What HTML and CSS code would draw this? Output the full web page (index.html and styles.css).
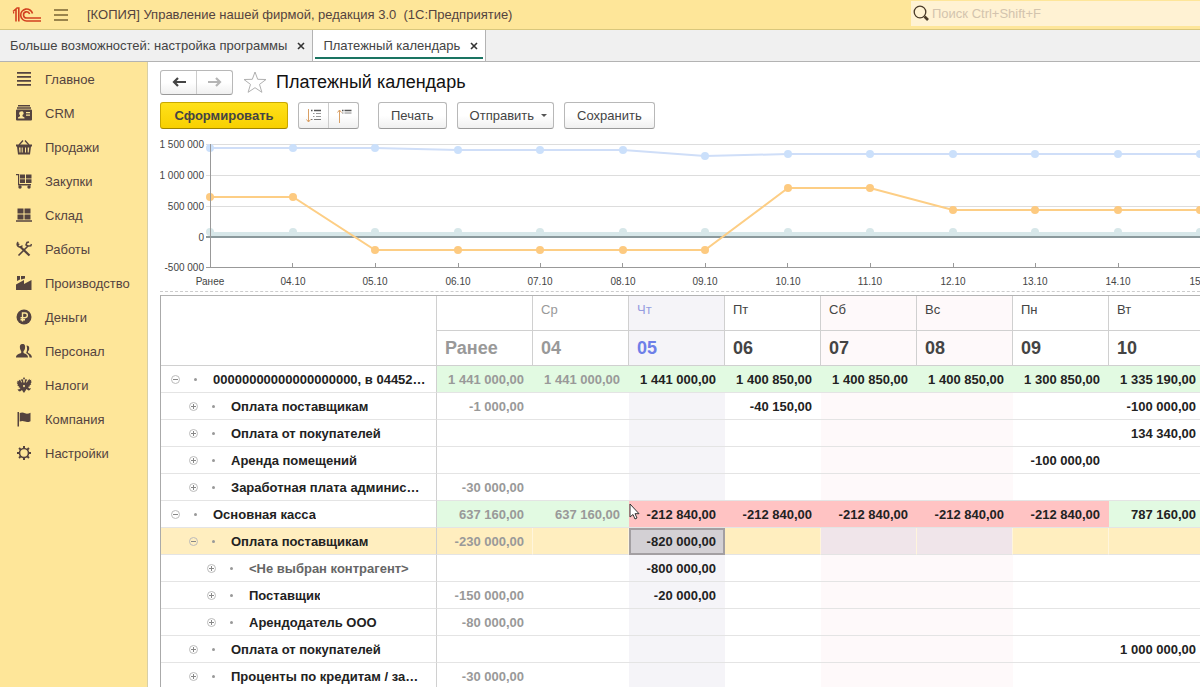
FILE: index.html
```html
<!DOCTYPE html>
<html lang="ru">
<head>
    <meta charset="UTF-8">
    <meta name="viewport" content="width=device-width, initial-scale=1.0">
    <title>Платежный календарь</title>
    <link rel="stylesheet" href="styles.css">
</head>
<body>
    <!-- toggle icons used in the tree -->
    <svg class="defs" aria-hidden="true">
        <symbol id="plus" viewBox="0 0 9 9"><circle cx="4.5" cy="4.5" r="4" fill="none" stroke="#bbb"/><path d="M2 4.5h5M4.500 2v5" stroke="#888"/></symbol>
        <symbol id="minus" viewBox="0 0 9 9"><circle cx="4.5" cy="4.5" r="4" fill="none" stroke="#bbb"/><path d="M2 4.5h5" stroke="#888"/></symbol>
    </svg>

    <header class="topbar">
        <svg class="logo" width="30" height="16" viewBox="0 0 30 16" fill="none" stroke="#d2401f" stroke-width="1.600">
            <path d="M1 4.500L4 2V14.500M1 5.800h1.200M6.800 14.500V1H4.500"/>
            <path d="M20.500 6.500A6 6 0 1 0 14.800 14H29M17.600 7A3.100 3.100 0 1 0 14.800 11H29"/>
        </svg>
        <button class="menu" aria-label="Меню">
            <svg width="14" height="12" viewBox="0 0 14 12" stroke="#7a6433" stroke-width="1.300"><path d="M0 1h14M0 6h14M0 11h14"/></svg>
        </button>
        <div class="app-title">[КОПИЯ] Управление нашей фирмой, редакция 3.0 &nbsp;(1С:Предприятие)</div>
        <div class="search">
            <svg width="17" height="17" viewBox="0 0 17 17" fill="none" stroke="#4a3a28"><circle cx="7" cy="7" r="5.800" stroke-width="1.300"/><path d="M11.500 11.500l3.500 3.500" stroke-width="2.600"/></svg>
            <input type="text" aria-label="Поиск" placeholder="Поиск Ctrl+Shift+F">
        </div>
    </header>

    <nav class="tabs">
        <div class="tab"><a href="#">Больше возможностей: настройка программы</a><button aria-label="Закрыть"><svg width="8" height="8" viewBox="0 0 8 8"><path d="M1 1l6 6M7 1L1 7" stroke="#333" stroke-width="1.600"/></svg></button></div>
        <div class="tab active"><a href="#">Платежный календарь</a><button aria-label="Закрыть"><svg width="8" height="8" viewBox="0 0 8 8"><path d="M1 1l6 6M7 1L1 7" stroke="#333" stroke-width="1.600"/></svg></button></div>
    </nav>

    <div class="layout">
        <nav class="sidebar">
            <a href="#"><svg viewBox="0 0 16 16"><path d="M1 1h14v1.800H1zM1 5h14v1.800H1zM1 9h14v1.800H1zM1 13h14v1.800H1z"/></svg>Главное</a>
            <a href="#"><svg viewBox="0 0 16 16"><path d="M2 0h12v1.500H2zM1 2.200h14v1.500H1z"/><path fill-rule="evenodd" d="M1 4.500h14q1 0 1 1V14.500q0 1-1 1H1q-1 0-1-1V5.500q0-1 1-1zM5 6.500a1.900 1.900 0 0 0-1 3.500v1.200L2 12.500V13.500h6.500v-1L6.500 11.200V10A1.900 1.900 0 0 0 5 6.500zM10 7v1.200h4V7zM10 9.500v1.200h4V9.500z"/></svg>CRM</a>
            <a href="#"><svg viewBox="0 0 16 16"><path d="M3 6l4-4.500M13 6L9 1.500" stroke="#54433f" stroke-width="1.300"/><path fill-rule="evenodd" d="M0 5.500h16v2h-1l-1 8H2L1 7.500H0zM3 8.500l.5 5h1v-5zM5.700 8.500v5h1v-5zM9 8.500v5h1v-5zM11.700 8.500v5h1l.5-5z"/></svg>Продажи</a>
            <a href="#"><svg viewBox="0 0 16 16"><path d="M0 1h3.200v10H15v1.400H2V2.200H0zM4 1.500h5v4H4zM10 1.500h5.500v4H10zM4 6.300h5V10H4zM10 6.300h5.500V10H10z"/><circle cx="4" cy="14" r="1.700"/><circle cx="13" cy="14" r="1.700"/></svg>Закупки</a>
            <a href="#"><svg viewBox="0 0 16 16"><path d="M1.500 1.500h6v5h-6zM8.500 1.500h6v5h-6zM1.500 7.500h6v5h-6zM8.500 7.500h6v5h-6zM0 13.200h16v1.500H0z"/></svg>Склад</a>
            <a href="#"><svg viewBox="0 0 16 16" fill="none" stroke="#54433f"><path d="M4 5.500L13.500 14.500" stroke-width="2.200"/><path d="M2.200 1.200A2.700 2.700 0 1 0 6.300 4.500M1 2.500l2.300 1.300M12 5L2.500 14.500" stroke-width="1.600"/><path d="M12 5l-2-1 1-2.500 2-.500M12 5l2.800-.2.700-1.800" stroke-width="1.500"/></svg>Работы</a>
            <a href="#"><svg viewBox="0 0 16 16"><path d="M1 1h3v3.500L1 6zM5 1h4v2.500L5 4.500zM0 15V9.500L8 5v4l7.500-4V15z"/></svg>Производство</a>
            <a href="#"><svg viewBox="0 0 16 16"><circle cx="8" cy="8" r="7.500"/><path d="M6.500 12.500V4H9a2.300 2.300 0 0 1 0 4.700H4.500M4.500 10.700H9" fill="none" stroke="#fde699" stroke-width="1.400"/></svg>Деньги</a>
            <a href="#"><svg viewBox="0 0 16 16"><path d="M6.500 1C4 1 3.500 3 4 5.500c.2 1.200.7 2 1.200 2.700v1.600C4 11 0 11 0 14.500h12c0-3.500-3.500-3.500-4.500-4.700V8.200C8.200 7.500 8.800 6.700 9 5.500 9.400 3 9 1 6.500 1zM10.500 2.500c2 0 3 1.200 2.700 3.400-.2 1.300-.7 1.800-1.200 2.400v1.500c1.500 1 3.500 1.300 4 4.700h-2.500c0-2.200-1.500-3.400-3.300-4.500.9-2 1.300-5 .3-7.500z"/></svg>Персонал</a>
            <a href="#"><svg viewBox="0 0 16 16"><path d="M8 0l1 1.500L8 3 7 1.500zM6.300 2l1 1.500v2h1.400v-2l1-1.500 1.800 1-1.300 1 .3 2L12 3.500l1.500-1.800.3 1.500 1.500-.4-.4 1.700 1 .3-1.300 1.700.7.700-1.800 1.300.5.800-2 .8 1.500 1.500 1.500-.5-1 2-1.500.3-2-1.400-.7 1.200L8 16l-1.300-1.800-.7-1.200-2 1.400-1.500-.3-1-2 1.500.5L4.500 11l-2-.8.5-.8L1.200 8.200l.7-.7L.6 5.800l1-.3-.4-1.700 1.500.4.300-1.500L4.500 3.500 5.500 6l.3-2-1.300-1z"/><path d="M7.200 8h1.600v1.500L8 10.500l-.8-1z" fill="#fde699"/></svg>Налоги</a>
            <a href="#"><svg viewBox="0 0 16 16"><path d="M1.500 1h1.500v14.500H1.500zM3.700 2C6 1 7.500 1.500 9 2.300c1.600.7 3.500.4 5.500-.6v8.500c-2 1-4 1.200-5.500.4-1.700-.8-3.300-1-5.300 0z"/></svg>Компания</a>
            <a href="#"><svg viewBox="0 0 16 16" fill="none" stroke="#54433f"><circle cx="8" cy="8" r="4.500" stroke-width="1.600"/><path d="M8 1v2.500M8 12.500V15M1 8h2.500M12.500 8H15M3.050 3.050l1.800 1.800M11.150 11.150l1.800 1.800M3.050 12.950l1.800-1.800M11.150 4.850l1.800-1.800" stroke-width="2"/></svg>Настройки</a>
        </nav>

        <main class="content">
            <div class="heading">
                <div class="group nav-buttons">
                    <button aria-label="Назад"><svg width="14" height="10" viewBox="0 0 14 10"><path d="M6 1L2 5l4 4M2 5h12" fill="none" stroke="#444" stroke-width="2.200"/></svg></button>
                    <button aria-label="Вперед"><svg width="14" height="10" viewBox="0 0 14 10"><path d="M8 1l4 4-4 4M12 5H0" fill="none" stroke="#b5b5b5" stroke-width="2.200"/></svg></button>
                </div>
                <button class="star" aria-label="В избранное"><svg width="24" height="22" viewBox="0 0 24 22"><path d="M12 1l2.700 7.300 8.300.2-6.500 4.900 2.400 7.900L12 16.700l-6.900 4.600 2.400-7.900L1 8.500l8.300-.2z" fill="#fff" stroke="#b0b0b0"/></svg></button>
                <h1>Платежный календарь</h1>
            </div>

            <div class="toolbar">
                <button class="btn primary">Сформировать</button>
                <div class="group tree-buttons">
                    <button aria-label="Развернуть"><svg width="16" height="16" viewBox="0 0 16 16" fill="none"><path d="M2.500 1v13M.5 11.500l2 2.500 2-2.500" stroke="#d9a066"/><path d="M5 2.500h1.500M8 2.500h7" stroke="#555" stroke-width="1.500"/><path d="M7 5.500h1.500M10 5.500h5M7 8.500h1.500M10 8.500h5" stroke="#999"/><path d="M5 11.500h1.500M8 11.500h7" stroke="#777"/></svg></button>
                    <button aria-label="Свернуть"><svg width="16" height="16" viewBox="0 0 16 16" fill="none"><path d="M3.500 15V2M1.500 4.500l2-2.500 2 2.500" stroke="#d9a066"/><path d="M6 2.500h1.500M8.500 2.500h7" stroke="#555" stroke-width="1.500"/><path d="M6 5h1.500M8.500 5h7" stroke="#888"/></svg></button>
                </div>
                <button class="btn">Печать</button>
                <button class="btn send">Отправить<span class="caret"></span></button>
                <button class="btn">Сохранить</button>
            </div>

            <div class="chart">
                <svg width="1060" height="155" role="img" aria-label="Остатки по дням">
                    <path class="grid" d="M46 8.500H1060M46 39.500H1060M46 70.500H1060"/>
                    <path class="band" d="M50 99H1060"/>
                    <g class="band-dots">
                        <circle cx="50" cy="96" r="4"/><circle cx="133" cy="96" r="4"/><circle cx="215" cy="96" r="4"/><circle cx="298" cy="96" r="4"/><circle cx="380" cy="96" r="4"/><circle cx="463" cy="96" r="4"/><circle cx="545" cy="96" r="4"/><circle cx="628" cy="96" r="4"/><circle cx="710" cy="96" r="4"/><circle cx="793" cy="96" r="4"/><circle cx="875" cy="96" r="4"/><circle cx="958" cy="96" r="4"/><circle cx="1040" cy="96" r="4"/>
                    </g>
                    <path class="zero" d="M46 101H1060"/>
                    <polyline class="bank" points="50,12 133,12 215,12 298,14 380,14 463,14 545,20 628,18 710,18 793,18 875,18 958,18 1040,18"/>
                    <g class="bank-dots">
                        <circle cx="50" cy="12" r="4"/><circle cx="133" cy="12" r="4"/><circle cx="215" cy="12" r="4"/><circle cx="298" cy="14" r="4"/><circle cx="380" cy="14" r="4"/><circle cx="463" cy="14" r="4"/><circle cx="545" cy="20" r="4"/><circle cx="628" cy="18" r="4"/><circle cx="710" cy="18" r="4"/><circle cx="793" cy="18" r="4"/><circle cx="875" cy="18" r="4"/><circle cx="958" cy="18" r="4"/><circle cx="1040" cy="18" r="4"/>
                    </g>
                    <polyline class="cash" points="50,61 133,61 215,114 298,114 380,114 463,114 545,114 628,52 710,52 793,74 875,74 958,74 1040,74"/>
                    <g class="cash-dots">
                        <circle cx="50" cy="61" r="4"/><circle cx="133" cy="61" r="4"/><circle cx="215" cy="114" r="4"/><circle cx="298" cy="114" r="4"/><circle cx="380" cy="114" r="4"/><circle cx="463" cy="114" r="4"/><circle cx="545" cy="114" r="4"/><circle cx="628" cy="52" r="4"/><circle cx="710" cy="52" r="4"/><circle cx="793" cy="74" r="4"/><circle cx="875" cy="74" r="4"/><circle cx="958" cy="74" r="4"/><circle cx="1040" cy="74" r="4"/>
                    </g>
                    <path class="axis" d="M50.500 8V131.500M46 131.500H1060M132.500 127v4M215.500 127v4M298.500 127v4M380.500 127v4M462.500 127v4M545.500 127v4M627.500 127v4M710.500 127v4M793.500 127v4M875.500 127v4M958.500 127v4M1040.500 127v4"/>
                    <g class="y-labels">
                        <text x="44" y="12">1 500 000</text><text x="44" y="43">1 000 000</text><text x="44" y="74">500 000</text><text x="44" y="105">0</text><text x="44" y="135">-500 000</text>
                    </g>
                    <g class="x-labels">
                        <text x="50" y="149">Ранее</text><text x="133" y="149">04.10</text><text x="215" y="149">05.10</text><text x="298" y="149">06.10</text><text x="380" y="149">07.10</text><text x="463" y="149">08.10</text><text x="545" y="149">09.10</text><text x="628" y="149">10.10</text><text x="710" y="149">11.10</text><text x="793" y="149">12.10</text><text x="875" y="149">13.10</text><text x="958" y="149">14.10</text><text x="1042" y="149">15.10</text>
                    </g>
                </svg>
            </div>

            <table class="calendar">
                <colgroup><col class="name"><col><col><col><col><col><col><col><col></colgroup>
                <thead>
                    <tr class="weekday"><th rowspan="2"></th><th></th><th class="past">Ср</th><th class="today">Чт</th><th>Пт</th><th class="off">Сб</th><th class="off">Вс</th><th>Пн</th><th>Вт</th></tr>
                    <tr class="date"><th class="past">Ранее</th><th class="past">04</th><th class="today">05</th><th>06</th><th class="off">07</th><th class="off">08</th><th>09</th><th>10</th></tr>
                </thead>
                <tbody>
                    <tr class="total">
                        <th><div class="node"><button aria-label="Свернуть"><svg><use href="#minus"/></svg></button><i></i><span>00000000000000000000, в 04452…</span></div></th>
                        <td class="past plus">1 441 000,00</td><td class="past plus">1 441 000,00</td><td class="plus">1 441 000,00</td><td class="plus">1 400 850,00</td><td class="plus">1 400 850,00</td><td class="plus">1 400 850,00</td><td class="plus">1 300 850,00</td><td class="plus">1 335 190,00</td>
                    </tr>
                    <tr>
                        <th><div class="node level-2"><button aria-label="Развернуть"><svg><use href="#plus"/></svg></button><i></i><span>Оплата поставщикам</span></div></th>
                        <td class="past">-1 000,00</td><td></td><td class="today"></td><td>-40 150,00</td><td class="off"></td><td class="off"></td><td></td><td>-100 000,00</td>
                    </tr>
                    <tr>
                        <th><div class="node level-2"><button aria-label="Развернуть"><svg><use href="#plus"/></svg></button><i></i><span>Оплата от покупателей</span></div></th>
                        <td></td><td></td><td class="today"></td><td></td><td class="off"></td><td class="off"></td><td></td><td>134 340,00</td>
                    </tr>
                    <tr>
                        <th><div class="node level-2"><button aria-label="Развернуть"><svg><use href="#plus"/></svg></button><i></i><span>Аренда помещений</span></div></th>
                        <td></td><td></td><td class="today"></td><td></td><td class="off"></td><td class="off"></td><td>-100 000,00</td><td></td>
                    </tr>
                    <tr>
                        <th><div class="node level-2"><button aria-label="Развернуть"><svg><use href="#plus"/></svg></button><i></i><span>Заработная плата админис…</span></div></th>
                        <td class="past">-30 000,00</td><td></td><td class="today"></td><td></td><td class="off"></td><td class="off"></td><td></td><td></td>
                    </tr>
                    <tr class="total">
                        <th><div class="node"><button aria-label="Свернуть"><svg><use href="#minus"/></svg></button><i></i><span>Основная касса</span></div></th>
                        <td class="past plus">637 160,00</td><td class="past plus">637 160,00</td>
                        <td class="gap">-212 840,00<svg class="cursor" width="12" height="18" viewBox="0 0 12 18"><path d="M1 1v13l3-2.500 2 4.500 2-1-2-4.300h4z" fill="#fff" stroke="#333"/></svg></td>
                        <td class="gap">-212 840,00</td><td class="gap">-212 840,00</td><td class="gap">-212 840,00</td><td class="gap">-212 840,00</td><td class="plus">787 160,00</td>
                    </tr>
                    <tr class="current">
                        <th><div class="node level-2"><button aria-label="Свернуть"><svg><use href="#minus"/></svg></button><i></i><span>Оплата поставщикам</span></div></th>
                        <td class="past">-230 000,00</td><td></td><td class="selected">-820 000,00</td><td></td><td class="off"></td><td class="off"></td><td></td><td></td>
                    </tr>
                    <tr>
                        <th><div class="node level-3 empty"><button aria-label="Развернуть"><svg><use href="#plus"/></svg></button><i></i><span>&lt;Не выбран контрагент&gt;</span></div></th>
                        <td></td><td></td><td class="today">-800 000,00</td><td></td><td class="off"></td><td class="off"></td><td></td><td></td>
                    </tr>
                    <tr>
                        <th><div class="node level-3"><button aria-label="Развернуть"><svg><use href="#plus"/></svg></button><i></i><span>Поставщик</span></div></th>
                        <td class="past">-150 000,00</td><td></td><td class="today">-20 000,00</td><td></td><td class="off"></td><td class="off"></td><td></td><td></td>
                    </tr>
                    <tr>
                        <th><div class="node level-3"><button aria-label="Развернуть"><svg><use href="#plus"/></svg></button><i></i><span>Арендодатель ООО</span></div></th>
                        <td class="past">-80 000,00</td><td></td><td class="today"></td><td></td><td class="off"></td><td class="off"></td><td></td><td></td>
                    </tr>
                    <tr>
                        <th><div class="node level-2"><button aria-label="Развернуть"><svg><use href="#plus"/></svg></button><i></i><span>Оплата от покупателей</span></div></th>
                        <td></td><td></td><td class="today"></td><td></td><td class="off"></td><td class="off"></td><td></td><td>1 000 000,00</td>
                    </tr>
                    <tr>
                        <th><div class="node level-2"><button aria-label="Развернуть"><svg><use href="#plus"/></svg></button><i></i><span>Проценты по кредитам / за…</span></div></th>
                        <td class="past">-30 000,00</td><td></td><td class="today"></td><td></td><td class="off"></td><td class="off"></td><td></td><td></td>
                    </tr>
                </tbody>
            </table>
        </main>
    </div>
</body>
</html>
```
FILE: styles.css
```css
* { box-sizing: border-box; }
body { margin: 0; height: 100vh; display: flex; flex-direction: column; overflow: hidden; font-family: "Liberation Sans", Arial, sans-serif; font-size: 13px; color: #444; background: #fff; }
button, input { font: inherit; color: inherit; }
button { padding: 0; border: none; background: none; cursor: pointer; }
a { color: inherit; text-decoration: none; }
svg { display: block; flex: none; }
.defs { display: none; }

/* top bar */
.topbar { display: flex; align-items: center; flex: none; height: 30px; padding-left: 12px; background: #fee699; border-bottom: 1px solid #d9c77c; color: #54433f; }
.menu { margin-left: 12px; }
.app-title { flex: 1; margin-left: 19px; white-space: nowrap; }
.search { display: flex; align-items: center; gap: 2px; width: 289px; height: 25px; margin-bottom: 2px; padding-left: 2px; background: #fff2d3; }
.search input { flex: 1; min-width: 0; padding: 0; border: none; outline: none; background: none; }
.search input::placeholder { color: #d3c4ae; opacity: 1; }

/* tabs */
.tabs { display: flex; flex: none; height: 32px; background: #f0f0f0; border-bottom: 1px solid #b3b3b3; }
.tab { display: flex; align-items: center; gap: 10px; padding: 0 7px 0 10px; border-right: 1px solid #b3b3b3; white-space: nowrap; }
.tab.active { position: relative; background: #fff; }
.tab.active::after { content: ""; position: absolute; left: 2px; right: 2px; bottom: 2px; height: 2px; background: #1a7462; }

.layout { display: flex; flex: 1; min-height: 0; }

/* sections */
.sidebar { flex: none; width: 148px; background: #fee699; border-right: 1px solid #d8cfa6; color: #54433f; }
.sidebar a { display: flex; align-items: center; gap: 13px; height: 34px; padding-left: 16px; }
.sidebar svg { width: 16px; height: 16px; }
.sidebar svg:not([fill]) { fill: #54433f; }

.content { flex: 1; min-width: 0; padding: 7px 0 0 12px; overflow: hidden; }
.heading { display: flex; align-items: center; height: 26px; }
.heading h1 { margin: 0 0 0 9px; font-size: 18px; font-weight: normal; color: #111; }
.star { margin-left: 10px; }

.group { display: flex; border: 1px solid #b8b8b8; border-bottom-color: #999; border-radius: 3px; background: linear-gradient(#fff 50%, #f0f0f0); }
.group button { display: flex; align-items: center; justify-content: center; flex: 1; }
.group button + button { border-left: 1px solid #ccc; }
.nav-buttons { width: 73px; height: 25px; }
.tree-buttons { width: 61px; height: 27px; margin-right: 9px; }

.toolbar { display: flex; align-items: center; gap: 10px; margin-top: 7px; }
.btn { height: 27px; padding: 0 12px; border: 1px solid #b8b8b8; border-bottom-color: #999; border-radius: 3px; background: linear-gradient(#fff 50%, #f0f0f0); white-space: nowrap; }
.btn.primary { min-width: 128px; border-color: #c9a800; border-bottom-color: #a08500; background: linear-gradient(#ffe11a, #f8d000); font-weight: bold; }
.btn.send { display: flex; align-items: center; gap: 7px; padding-right: 6px; }
.caret { border: 3px solid transparent; border-top-color: #555; border-bottom: none; }

/* chart */
.chart { height: 156px; margin-top: 7px; border-bottom: 1px dashed #ccc; overflow: hidden; }
.chart text { font-size: 10px; fill: #444; }
.grid { stroke: #ddd; }
.axis { stroke: #999; fill: none; }
.zero { stroke: #8b999c; stroke-width: 2; }
.band { stroke: #d7e7e9; stroke-width: 6; }
.band-dots { fill: #d7e7e9; }
.bank { stroke: #cfdef8; stroke-width: 2; fill: none; }
.bank-dots { fill: #cbe0fb; }
.cash { stroke: #fdce85; stroke-width: 2; fill: none; }
.cash-dots { fill: #fdca80; }
.y-labels { text-anchor: end; }
.x-labels { text-anchor: middle; }

/* payment calendar */
.calendar { width: 1045px; margin-top: 3px; table-layout: fixed; border-collapse: separate; border-spacing: 0; border-top: 1px solid #b3b3b3; border-left: 1px solid #aaa; color: #222; }
.calendar col { width: 96px; }
.calendar col.name { width: 276px; }
.calendar th, .calendar td { padding: 0; }
.calendar thead th { height: 35px; padding-left: 8px; border-right: 1px solid #d0d0d0; border-bottom: 1px solid #d0d0d0; text-align: left; color: #444; }
.calendar .weekday th { padding-bottom: 8px; font-weight: normal; }
.date th { font-size: 18px; }
.calendar tbody th { height: 27px; border-right: 1px solid #d0d0d0; border-bottom: 1px solid #e4e4e4; text-align: left; }
.calendar td { padding-right: 9px; border-bottom: 1px solid #e4e4e4; text-align: right; font-weight: bold; white-space: nowrap; }
.calendar .past, .calendar thead .past { color: #999; }
.calendar .today { background: #f5f4f8; }
.calendar thead .today { color: #6e7fe8; }
.calendar .weekday .today { color: #969de0; }
.calendar .off { background: #fef9fa; }
.calendar .plus { background: #e2fae2; }
.calendar .gap { position: relative; background: #ffc3c3; }
.calendar .current th, .calendar .current td { background: #ffeebf; }
.calendar .current td { border-right: 1px solid #fff5dc; padding-right: 8px; }
.calendar .current td.off { background: #f0e5ea; }
.calendar .current td.selected { padding-right: 7px; border: 2px solid #a39fa2; background: #d3d0d4; }

.node { display: flex; align-items: center; padding: 0 8px 0 10px; }
.node.level-2 { padding-left: 28px; }
.node.level-3 { padding-left: 46px; }
.node svg { width: 9px; height: 9px; }
.node i { flex: none; width: 3px; height: 3px; margin: 0 16px 0 14px; border-radius: 50%; background: #999; }
.node span { overflow: hidden; text-overflow: ellipsis; white-space: nowrap; }
.node.empty { color: #666; }
.cursor { position: absolute; left: 0; top: 2px; }
```
